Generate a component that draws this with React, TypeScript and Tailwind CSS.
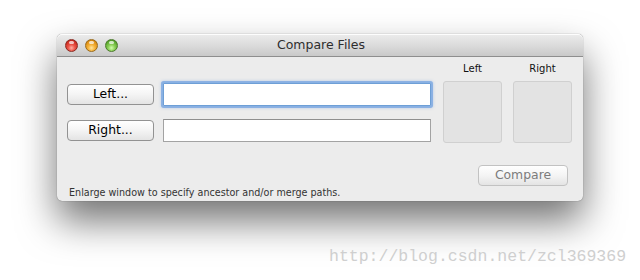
import React from "react";

const font = { fontFamily: '"DejaVu Sans", "Liberation Sans", sans-serif' };

function Light({ kind }: { kind: "red" | "yellow" | "green" }) {
  const cls =
    kind === "red"
      ? "bg-[radial-gradient(circle_at_50%_72%,#ffb0a4_0%,#ec5548_35%,#c8281d_75%,#991a12_100%)] border-[#8a2a22]"
      : kind === "yellow"
      ? "bg-[radial-gradient(circle_at_50%_72%,#ffe6a0_0%,#f6b33a_35%,#d8890f_75%,#a86508_100%)] border-[#9a6a1a]"
      : "bg-[radial-gradient(circle_at_50%_72%,#d2ffae_0%,#8cd058_35%,#53a229_75%,#3a7a18_100%)] border-[#4c7a2c]";
  return (
    <div className={`relative w-[13px] h-[13px] rounded-full border ${cls}`}>
      <div className="absolute left-[3px] top-[1px] w-[5px] h-[3px] rounded-full bg-white/70" />
    </div>
  );
}

function MacButton({ label, disabled, w }: { label: string; disabled?: boolean; w: string }) {
  return (
    <div
      className={`${w} h-[21px] flex items-center justify-center rounded-[4px] border bg-gradient-to-b from-[#ffffff] via-[#f4f4f4] to-[#e4e4e4] ${
        disabled ? "border-[#c2c2c2] text-[#7c7c7c]" : "border-[#929292] text-[#000]"
      }`}
    >
      <span className="text-[12.4px] leading-none">{label}</span>
    </div>
  );
}

export default function App() {
  return (
    <div className="w-[640px] h-[280px] bg-white overflow-hidden" style={font}>
      <div className="pt-[34px] pl-[57px]">
        <div className="w-[526px] h-[167px] rounded-[5px] bg-[#ececec] shadow-[0_20px_38px_rgba(0,0,0,0.55),0_0_1px_rgba(0,0,0,0.6)] flex flex-col overflow-hidden">
          {/* title bar */}
          <div className="h-[23px] flex items-center relative border-b border-[#8e8e8e] bg-gradient-to-b from-[#ececec] via-[#dcdcdc] to-[#c9c9c9] rounded-t-[5px] shadow-[inset_0_1px_0_rgba(255,255,255,0.9)]">
            <div className="flex items-center gap-[7px] pl-[8px] pt-[1px]">
              <Light kind="red" />
              <Light kind="yellow" />
              <Light kind="green" />
            </div>
            <div className="absolute inset-0 flex items-center justify-center text-[12.5px] text-[#2e2e2e] pl-[2px]">
              Compare Files
            </div>
          </div>

          {/* body */}
          <div className="flex items-start">
            <div className="ml-[10px] mt-[26px] flex flex-col gap-[13px]">
              <div className="flex items-center h-[23px]">
                <MacButton label="Left..." w="w-[87px]" />
                <div className="ml-[9px] w-[268px] h-[23px] bg-white border border-[#6e9fd6] shadow-[0_0_0_2px_rgba(120,165,225,0.75),0_0_3px_2px_rgba(120,165,225,0.5)] rounded-[1px]" />
              </div>
              <div className="flex items-center h-[23px]">
                <MacButton label="Right..." w="w-[87px]" />
                <div className="ml-[9px] w-[268px] h-[23px] bg-white border border-[#a3a3a3] border-t-[#8f8f8f]" />
              </div>
            </div>
            <div className="ml-[12px] mt-[5px] grid grid-cols-[59px_59px] gap-x-[11px]">
              <div className="h-[14px] text-center text-[10px] leading-[14px] text-[#111]">Left</div>
              <div className="h-[14px] text-center text-[10px] leading-[14px] text-[#111]">Right</div>
              <div className="mt-[5px] h-[62px] rounded-[3px] bg-[#e3e3e3] border border-[#d0d0d0]" />
              <div className="mt-[5px] h-[62px] rounded-[3px] bg-[#e3e3e3] border border-[#d0d0d0]" />
            </div>
          </div>

          <div className="flex justify-end mt-[22px] mr-[15px]">
            <MacButton label="Compare" disabled w="w-[90px]" />
          </div>
          <div className="ml-[12px] h-[13px] text-[9.6px] leading-[13px] text-[#333]">
            Enlarge window to specify ancestor and/or merge paths.
          </div>
        </div>
      </div>
      <div
        className="mt-[46px] ml-[329px] text-[16.5px] leading-[20px] text-[#cfcfcf] whitespace-nowrap"
        style={{ fontFamily: '"Liberation Mono", monospace' }}
      >
        http://blog.csdn.net/zcl369369
      </div>
    </div>
  );
}
